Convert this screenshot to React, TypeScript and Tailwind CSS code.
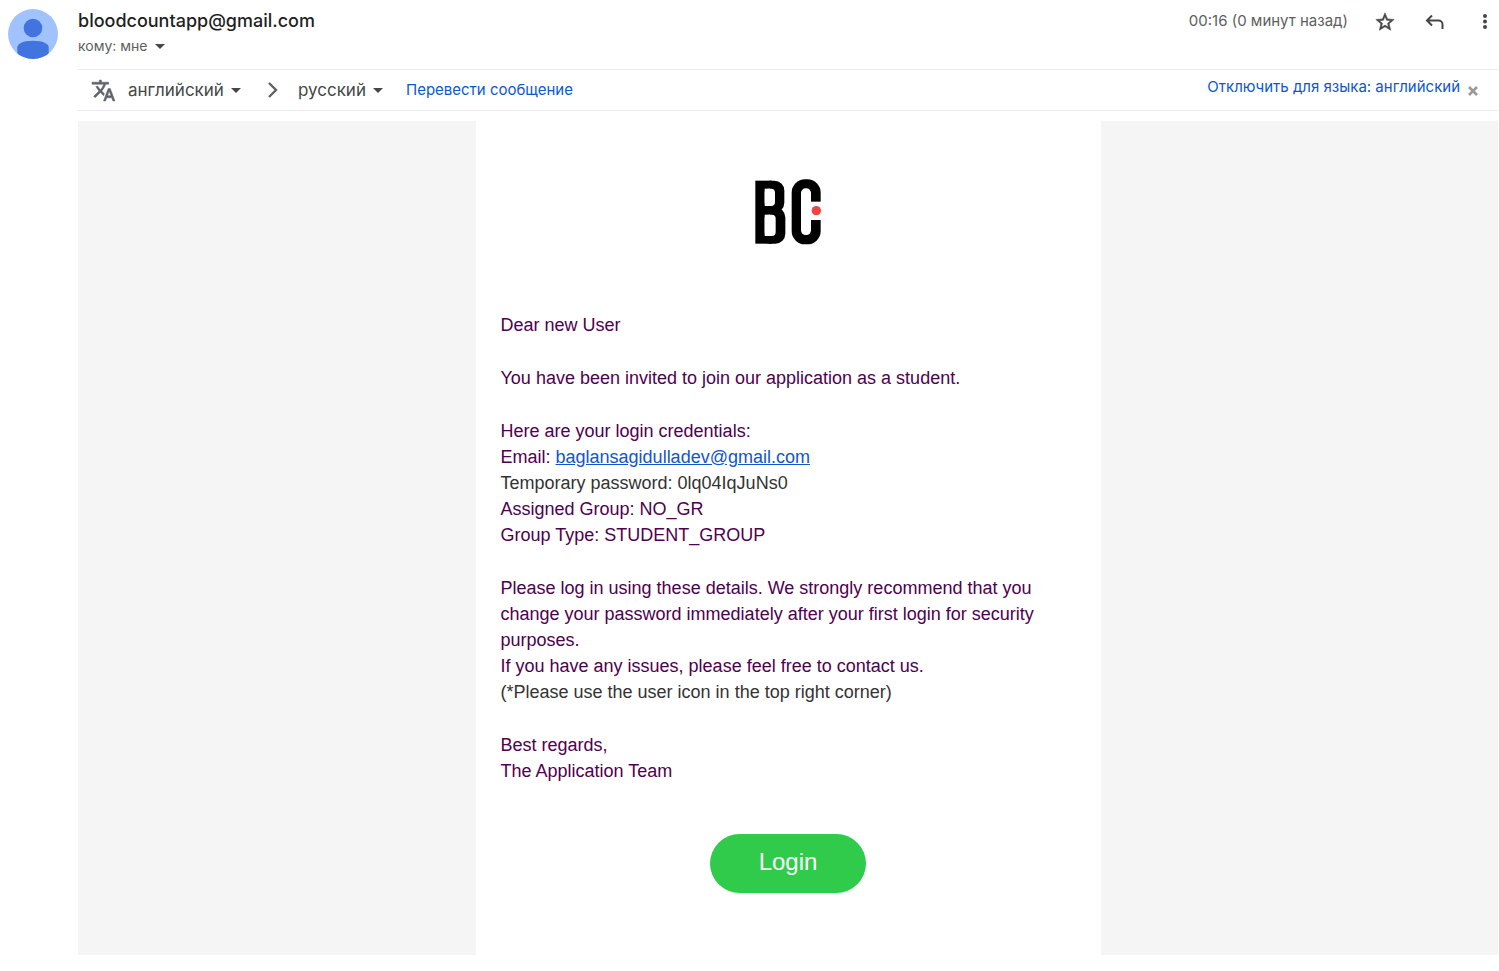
import React from "react";

const headFont = "font-['Inter','Roboto',sans-serif]";

function Caret() {
  return (
    <svg viewBox="0 0 10 5" className="pointer-events-none h-[5px] w-[10px] shrink-0 fill-[#444746]" aria-hidden="true">
      <path d="M0 0h10L5 5z" />
    </svg>
  );
}

function Avatar() {
  return (
    <svg viewBox="0 0 50 50" className="size-[50px] shrink-0" role="img" aria-label="bloodcountapp">
      <defs>
        <clipPath id="avatar-clip">
          <circle cx="25" cy="25" r="25" />
        </clipPath>
      </defs>
      <g clipPath="url(#avatar-clip)">
        <rect width="50" height="50" fill="#a0c2ff" />
        <circle cx="25" cy="19" r="9.3" fill="#4274e0" />
        <path d="M9.3 52V38.500C9.300 34.500 15 31.700 25 31.700S40.700 34.500 40.700 38.500V52z" fill="#4274e0" />
      </g>
    </svg>
  );
}

function BrandMark() {
  return (
    <svg viewBox="-5 0 300 285" className="h-[95px] w-[100px]" role="img" aria-label="BC">
      <g fill="#000">
        <rect x="47" y="47" width="50" height="189" />
        <rect x="60" y="47" width="74" height="96" rx="30" />
        <rect x="60" y="127" width="77" height="109" rx="30" />
        <rect x="156" y="43" width="87" height="195" rx="40" />
      </g>
      <g fill="#fff">
        <rect x="75" y="71" width="16" height="52" />
        <rect x="75" y="71" width="31" height="52" rx="12" />
        <rect x="75" y="149" width="16" height="64" />
        <rect x="75" y="149" width="33" height="64" rx="12" />
        <rect x="184" y="70" width="30" height="140" rx="14" />
        <rect x="200" y="110" width="50" height="55" />
      </g>
      <circle cx="230" cy="137" r="14" fill="#f04343" />
    </svg>
  );
}

function LanguageSelect({ label, value, options }: { label: string; value: string; options: string[] }) {
  return (
    <label className="flex items-center gap-[7px]">
      <select
        aria-label={label}
        defaultValue={value}
        className="field-sizing-content cursor-pointer appearance-none bg-transparent text-[17px] leading-6 text-[#444746] outline-none"
      >
        {options.map((o) => (
          <option key={o}>{o}</option>
        ))}
      </select>
      <Caret />
    </label>
  );
}

function MessageHeader() {
  return (
    <header className="flex items-start justify-between pb-[11px]">
      <div>
        <h1 className="text-[18px] leading-6 font-medium text-[#1f1f1f]">bloodcountapp@gmail.com</h1>
        <button type="button" className="mt-px flex items-center gap-[7px] text-[14px] leading-6 text-[#5e5e5e]">
          кому: мне
          <Caret />
        </button>
      </div>
      <div className="flex items-start text-[#444746]">
        <time className="mr-[26px] text-[15px] leading-6 text-[#5e5e5e]">00:16 (0 минут назад)</time>
        <div className="flex items-center pt-[2px]">
          <button type="button" aria-label="Пометить" className="mr-[29px]">
            <svg viewBox="0 0 24 24" className="size-[22px] fill-current stroke-current stroke-[0.6]">
              <path d="M22 9.240l-7.190-.62L12 2 9.190 8.630 2 9.240l5.460 4.730L5.820 21 12 17.270 18.180 21l-1.630-7.030L22 9.240zM12 15.400l-3.760 2.270 1-4.280-3.320-2.880 4.380-.38L12 6.100l1.710 4.040 4.380.38-3.320 2.880 1 4.280L12 15.400z" />
            </svg>
          </button>
          <button type="button" aria-label="Ответить" className="mr-[30px]">
            <svg viewBox="0 0 20 20" className="size-5 fill-none stroke-current stroke-2">
              <path d="M7 3.500L2 8.500l5 5M2 8.500h11.500a4 4 0 0 1 4 4V17" />
            </svg>
          </button>
          <button type="button" aria-label="Ещё" className="mr-[3px]">
            <svg viewBox="0 0 20 20" className="size-5 fill-current">
              <circle cx="10" cy="4" r="2" />
              <circle cx="10" cy="9.5" r="2" />
              <circle cx="10" cy="15" r="2" />
            </svg>
          </button>
        </div>
      </div>
    </header>
  );
}

function TranslateBar() {
  return (
    <section className="flex h-[42px] items-center border-y border-[#e8eaed] pl-[13px]">
      <svg viewBox="0 0 24 24" className="mr-3 size-[25px] fill-[#5f6368] stroke-[#5f6368] stroke-[0.5]" aria-hidden="true">
        <path d="M12.870 15.070l-2.540-2.510.03-.03c1.740-1.940 2.980-4.170 3.710-6.530H17V4h-7V2H8v2H1v1.990h11.170C11.500 7.920 10.440 9.750 9 11.350 8.070 10.320 7.300 9.190 6.690 8h-2c.73 1.630 1.730 3.170 2.980 4.560l-5.090 5.020L4 19l5-5 3.110 3.110.76-2.040zM18.500 10h-2L12 22h2l1.120-3h4.750L21 22h2l-4.500-12zm-2.620 7l1.620-4.330L19.120 17h-3.240z" />
      </svg>
      <LanguageSelect label="Исходный язык" value="английский" options={["английский", "русский"]} />
      <svg viewBox="0 0 10 16" className="mr-5 ml-[27px] h-4 w-[10px] fill-none stroke-[#5f6368] stroke-[2.4]" aria-hidden="true">
        <path d="M1 1l7 7-7 7" />
      </svg>
      <LanguageSelect label="Язык перевода" value="русский" options={["русский", "английский"]} />
      <a href="#translate" className="ml-[23px] text-[15px] leading-6 text-[#0b57d0]">
        Перевести сообщение
      </a>
      <div className="mr-5 mb-[6px] ml-auto flex items-center gap-2">
        <a href="#disable" className="text-[15px] leading-6 text-[#0b57d0]">
          Отключить для языка: английский
        </a>
        <button type="button" aria-label="Закрыть" className="mt-2">
          <svg viewBox="0 0 10 10" className="size-[10px] fill-none stroke-[#9a9a9a] stroke-[2.6]">
            <path d="M1 1l8 8M9 1L1 9" />
          </svg>
        </button>
      </div>
    </section>
  );
}

function MessageBody() {
  return (
    <div className="mt-[10px] bg-[#f5f5f5]">
      <article className="mx-auto flex max-w-[625px] flex-col items-center bg-white px-[25px] pt-11 pb-[62px] font-['Liberation_Sans',Arial,sans-serif]">
        <BrandMark />
        <div className="mt-[52px] flex w-full flex-col gap-[27px] text-[18px] leading-[26px] text-[#500050]">
          <p>Dear new User</p>
          <p>You have been invited to join our application as a student.</p>
          <p>
            Here are your login credentials:
            <br />
            Email:{" "}
            <a href="mailto:baglansagidulladev@gmail.com" className="text-[#1155cc] underline">
              baglansagidulladev@gmail.com
            </a>
            <br />
            <span className="text-[#333333]">Temporary password: 0lq04IqJuNs0</span>
            <br />
            Assigned Group: NO_GR
            <br />
            Group Type: STUDENT_GROUP
          </p>
          <p>
            Please log in using these details. We strongly recommend that you change your password immediately after your
            first login for security purposes.
            <br />
            If you have any issues, please feel free to contact us.
            <br />
            <span className="text-[#333333]">(*Please use the user icon in the top right corner)</span>
          </p>
          <p>
            Best regards,
            <br />
            The Application Team
          </p>
        </div>
        <a
          href="#login"
          className="mt-[50px] rounded-full bg-[#31cb4b] px-[49px] pt-[14px] pb-[17px] text-[24px] leading-7 text-white"
        >
          Login
        </a>
      </article>
    </div>
  );
}

export default function App() {
  return (
    <main className={`flex min-h-screen items-start gap-5 bg-white pt-[9px] pr-px pb-4 pl-2 ${headFont}`}>
      <Avatar />
      <div className="min-w-0 flex-1">
        <MessageHeader />
        <TranslateBar />
        <MessageBody />
      </div>
    </main>
  );
}
